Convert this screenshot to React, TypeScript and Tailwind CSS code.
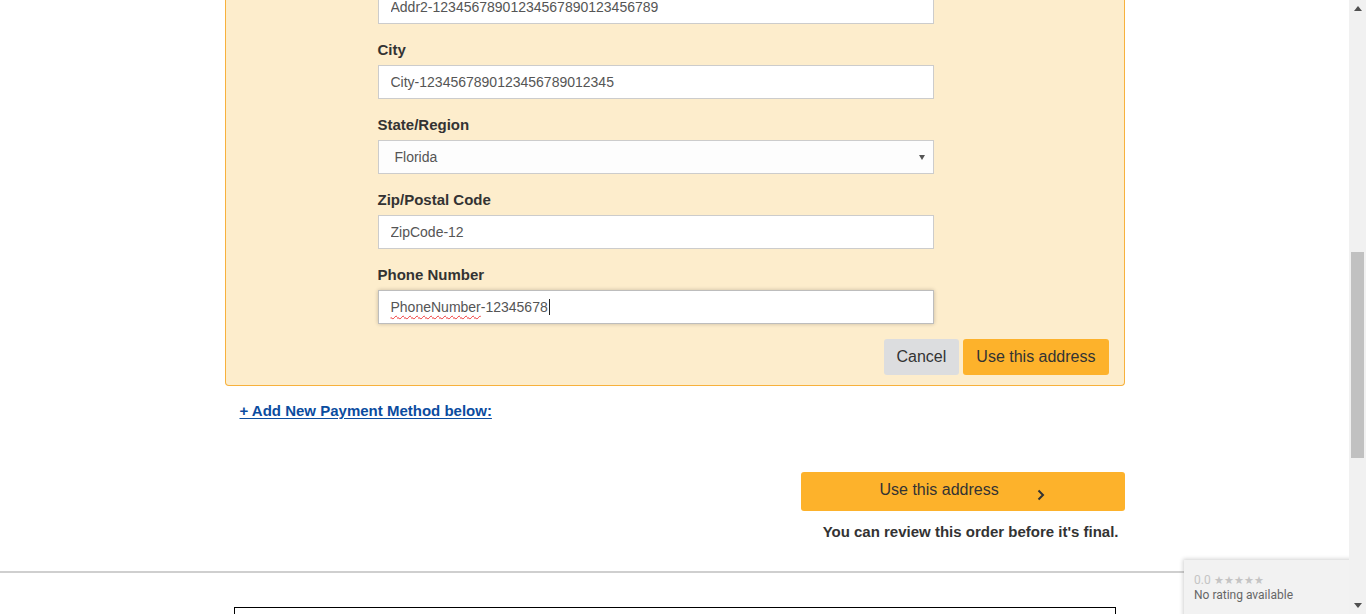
import React from "react";

const font = { fontFamily: '"Liberation Sans", Arial, sans-serif' };

function Label({ children }: { children: React.ReactNode }) {
  return (
    <label className="block h-5 pt-[1px] leading-5 mb-[6px] text-[15px] font-bold text-[#333]">
      {children}
    </label>
  );
}

function TextField({ value }: { value: string }) {
  return (
    <input
      readOnly
      value={value}
      className="block h-[34px] w-[556px] border border-[#ccc] bg-white px-3 text-[14px] text-[#555] outline-none"
    />
  );
}

function Group({ label, children }: { label: string; children: React.ReactNode }) {
  return (
    <div className="mb-[15px]">
      <Label>{label}</Label>
      {children}
    </div>
  );
}

function Scrollbar() {
  return (
    <div className="flex h-[614px] w-[17px] flex-col bg-[#f1f1f1]">
      <div className="flex h-[17px] items-center justify-center">
        <svg width="8" height="5" viewBox="0 0 8 5"><path d="M0 5 L4 0 L8 5 Z" fill="#505050" /></svg>
      </div>
      <div className="flex-1 px-[2px]">
        <div className="mt-[235px] h-[206px] w-[13px] bg-[#c1c1c1]" />
      </div>
      <div className="flex h-[17px] items-center justify-center">
        <svg width="8" height="5" viewBox="0 0 8 5"><path d="M0 0 L8 0 L4 5 Z" fill="#505050" /></svg>
      </div>
    </div>
  );
}

export default function App() {
  return (
    <div className="flex h-[614px] w-[1366px] overflow-hidden bg-white" style={font}>
      <div className="relative h-[614px] flex-1 overflow-hidden">
        <div className="mx-auto -mt-[10px] w-[900px]">
          {/* address form panel, top is scrolled away */}
          <div className="rounded-b-[4px] border border-t-0 border-[#f7b13c] bg-[#fdedcc] pb-[10px] pl-[152px] pr-[15px]">
            <div className="mb-[15px]">
              <TextField value="Addr2-1234567890123456789012345678​9" />
            </div>
            <Group label="City">
              <TextField value="City-1234567890123456789012345" />
            </Group>
            <Group label="State/Region">
              <div className="relative flex h-[34px] w-[556px] items-center border border-[#ccc] bg-[#fdfdfd] pl-4 text-[14px] text-[#555]">
                Florida
                <svg className="absolute right-[8px] top-[14px]" width="6" height="5" viewBox="0 0 6 5">
                  <path d="M0 0 L6 0 L3 5 Z" fill="#555" />
                </svg>
              </div>
            </Group>
            <Group label="Zip/Postal Code">
              <TextField value="ZipCode-12" />
            </Group>
            <Group label="Phone Number">
              <div className="flex h-[34px] w-[556px] items-center border border-[#bdbdbd] bg-white px-3 text-[14px] text-[#555] shadow-[0_0_4px_rgba(0,0,0,0.22)]">
                <span className="underline decoration-wavy decoration-[#e33] decoration-1 underline-offset-[3px]">PhoneNumber</span>
                <span>-12345678</span>
                <span className="ml-[1px] h-[16px] w-px bg-[#222]" />
              </div>
            </Group>
            <div className="flex justify-end gap-1">
              <button className="h-9 rounded-[3px] bg-[#dcdddf] px-[13px] text-[16px] text-[#333]">Cancel</button>
              <button className="h-9 rounded-[3px] bg-[#fdb22b] px-[13px] text-[16px] text-[#333]">Use this address</button>
            </div>
          </div>

          <div className="mt-[15px] h-5 pl-[15px] leading-5">
            <a className="text-[15px] font-bold leading-5 text-[#0b4c9f] underline underline-offset-2">
              + Add New Payment Method below:
            </a>
          </div>

          <div className="mt-[51px] flex flex-col items-end">
            <button className="relative flex h-[39px] w-[324px] items-center rounded-[3px] bg-[#fdb22b] pl-[79px] text-[16px] text-[#333]">
              <span className="-mt-[4px]">Use this address</span>
              <svg className="absolute left-[236px] top-[17px]" width="8" height="12" viewBox="0 0 8 12">
                <path d="M1.5 1.5 L6 6 L1.5 10.5" fill="none" stroke="#333" strokeWidth="2" />
              </svg>
            </button>
            <p className="mt-[11px] pr-[6px] text-right text-[15px] font-bold leading-5 text-[#333]">
              You can review this order before it's final.
            </p>
          </div>
        </div>

        <div className="mt-[29px] h-[2px] w-full bg-[#cfcfcf]" />
        <div className="mx-auto mt-[34px] h-[40px] w-[882px] border border-black" />

        {/* rating badge overlay */}
        <div className="absolute left-[1184px] top-[560px] h-[60px] w-[170px] bg-[#f2f2f2] pl-[10px] pt-[13px] shadow-[-1px_-1px_4px_rgba(0,0,0,0.18)]" style={{ fontFamily: "Roboto, Arial, sans-serif" }}>
          <div className="text-[12px] leading-[15px] text-[#c4c4c4]">0.0 <span className="text-[11px]">★★★★★</span></div>
          <div className="text-[12px] leading-[15px] text-[#666]">No rating available</div>
        </div>
      </div>
      <Scrollbar />
    </div>
  );
}
